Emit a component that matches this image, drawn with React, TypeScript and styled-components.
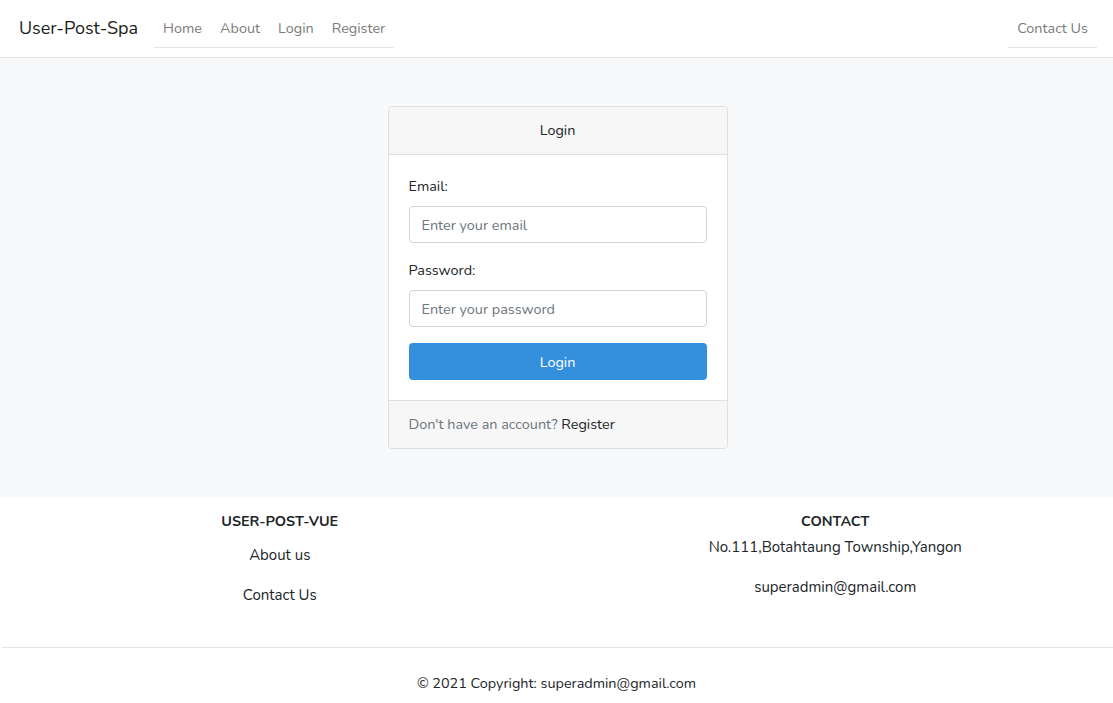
import React from "react";
import styled, { createGlobalStyle } from "styled-components";

const GlobalStyle = createGlobalStyle`
  * { box-sizing: border-box; }
  body {
    margin: 0;
    background: #ffffff;
    font-family: "Nunito", "Lato", "Liberation Sans", sans-serif;
    font-size: 14.4px;
    line-height: 1.6;
    color: #212529;
  }
`;

export default function App(): JSX.Element {
  return (
    <>
      <GlobalStyle />
      <Navbar>
        <Brand>User-Post-Spa</Brand>
        <NavList>
          <NavLink>Home</NavLink>
          <NavLink>About</NavLink>
          <NavLink>Login</NavLink>
          <NavLink>Register</NavLink>
        </NavList>
        <NavList $right>
          <NavLink>Contact Us</NavLink>
        </NavList>
      </Navbar>

      <Main>
        <Card>
          <CardHeader>Login</CardHeader>
          <CardBody>
            <FormGroup>
              <Label>Email:</Label>
              <Input type="email" placeholder="Enter your email" />
            </FormGroup>
            <FormGroup>
              <Label>Password:</Label>
              <Input type="password" placeholder="Enter your password" />
            </FormGroup>
            <SubmitBtn>Login</SubmitBtn>
          </CardBody>
          <CardFooter>
            Don't have an account? <FooterLink>Register</FooterLink>
          </CardFooter>
        </Card>
      </Main>

      <Footer>
        <FooterRow>
          <FooterCol>
            <FooterTitle>USER-POST-VUE</FooterTitle>
            <FooterList>
              <FooterItem>About us</FooterItem>
              <FooterItem>Contact Us</FooterItem>
            </FooterList>
          </FooterCol>
          <FooterCol>
            <FooterTitle $tight>CONTACT</FooterTitle>
            <FooterText>No.111,Botahtaung Township,Yangon</FooterText>
            <FooterText>superadmin@gmail.com</FooterText>
          </FooterCol>
        </FooterRow>
        <Copyright>© 2021 Copyright: superadmin@gmail.com</Copyright>
      </Footer>
    </>
  );
}

const Navbar = styled.nav`
  display: flex;
  align-items: flex-start;
  height: 58px;
  padding: 10px 16px 0 19px;
  background: #ffffff;
  border-bottom: 1px solid #e6e6e6;
`;
const Brand = styled.a`
  font-size: 18px;
  line-height: 36px;
  color: #1a1d20;
  margin-right: 16px;
`;
const NavList = styled.ul<{ $right?: boolean }>`
  display: flex;
  list-style: none;
  margin: 0 0 0 ${(p) => (p.$right ? "auto" : "0")};
  padding: 0;
  border-bottom: 1px solid #e3e5e8;
`;
const NavLink = styled.li`
  padding: 7px 9px;
  line-height: 23px;
  color: #7b7b7b;
  font-size: 14.4px;
  cursor: pointer;
`;

const Main = styled.main`
  background: #f8f9fa;
  padding: 48px 0 48px 2px;
  display: flex;
  justify-content: center;
`;
const Card = styled.section`
  width: 340px;
  background: #ffffff;
  border: 1px solid #dfdfdf;
  border-radius: 4px;
  overflow: hidden;
`;
const CardHeader = styled.header`
  background: #f7f7f7;
  border-bottom: 1px solid #dfdfdf;
  padding: 12px 20px;
  text-align: center;
  line-height: 23px;
`;
const CardBody = styled.div`
  padding: 20px;
`;
const FormGroup = styled.div`
  margin-bottom: 16px;
`;
const Label = styled.label`
  display: block;
  margin-bottom: 8px;
`;
const Input = styled.input`
  display: block;
  width: 100%;
  height: 37px;
  padding: 6px 12px;
  font-family: inherit;
  font-size: 14.4px;
  color: #495057;
  border: 1px solid #ced4da;
  border-radius: 4px;
  &::placeholder {
    color: #6c757d;
  }
`;
const SubmitBtn = styled.button`
  display: block;
  width: 100%;
  height: 37px;
  margin-top: 16px;
  border: none;
  border-radius: 4px;
  background: #3490dc;
  color: #ffffff;
  font-family: inherit;
  font-size: 14.4px;
  cursor: pointer;
`;
const CardFooter = styled.footer`
  background: #f7f7f7;
  border-top: 1px solid #dfdfdf;
  padding: 12px 20px;
  line-height: 23px;
  color: #6c757d;
`;
const FooterLink = styled.a`
  color: #212529;
`;

const Footer = styled.footer`
  background: #ffffff;
`;
const FooterRow = styled.div`
  display: grid;
  grid-template-columns: 1fr 1fr;
  padding: 13px 0 31px 0;
  border-bottom: 1px solid #e4e4e4;
  margin-left: 2px;
`;
const FooterCol = styled.div`
  text-align: center;
`;
const FooterTitle = styled.h6<{ $tight?: boolean }>`
  margin: 0 0 ${(p) => (p.$tight ? "3px" : "11px")};
  font-size: 14.4px;
  font-weight: 700;
  line-height: 23px;
  color: #212529;
`;
const FooterList = styled.ul`
  list-style: none;
  margin: 0;
  padding: 0;
`;
const FooterItem = styled.li`
  line-height: 23px;
  margin-bottom: 17px;
  font-size: 15px;
  &:last-child {
    margin-bottom: 8px;
  }
`;
const FooterText = styled.p`
  margin: 0 0 17px;
  line-height: 23px;
  font-size: 15px;
`;
const Copyright = styled.div`
  text-align: center;
  padding: 24px 0 10px;
  line-height: 23px;
  font-size: 14.4px;
`;
